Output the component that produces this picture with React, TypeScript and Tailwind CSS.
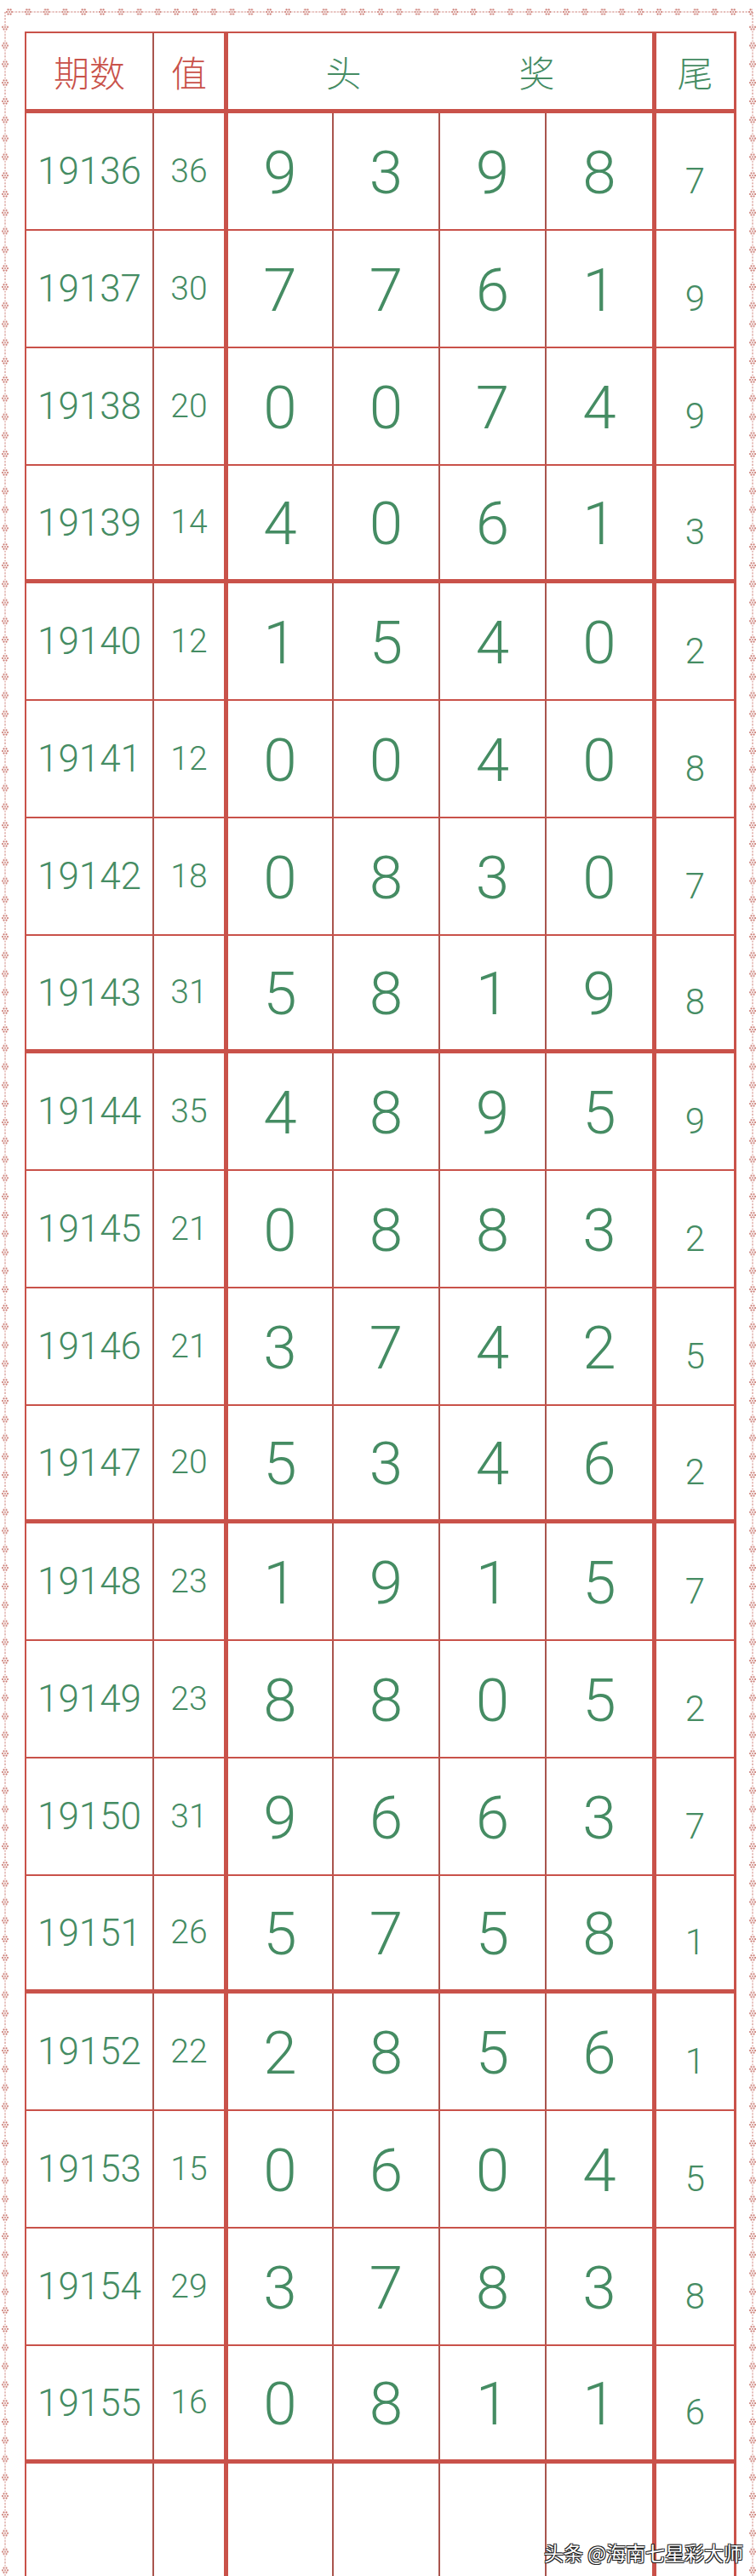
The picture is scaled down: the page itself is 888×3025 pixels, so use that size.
import React from 'react';

// ─── data ─────────────────────────────────────────────
const ROWS: [string, string, string, string][] = [
  ['19136', '36', '9398', '7'],
  ['19137', '30', '7761', '9'],
  ['19138', '20', '0074', '9'],
  ['19139', '14', '4061', '3'],
  ['19140', '12', '1540', '2'],
  ['19141', '12', '0040', '8'],
  ['19142', '18', '0830', '7'],
  ['19143', '31', '5819', '8'],
  ['19144', '35', '4895', '9'],
  ['19145', '21', '0883', '2'],
  ['19146', '21', '3742', '5'],
  ['19147', '20', '5346', '2'],
  ['19148', '23', '1915', '7'],
  ['19149', '23', '8805', '2'],
  ['19150', '31', '9663', '7'],
  ['19151', '26', '5758', '1'],
  ['19152', '22', '2856', '1'],
  ['19153', '15', '0604', '5'],
  ['19154', '29', '3783', '8'],
  ['19155', '16', '0811', '6'],
];

const FLOWER = '#c9756d';

function Flower({ cx, cy }: { cx: number; cy: number }) {
  const dots = [0, 60, 120, 180, 240, 300].map((a) => {
    const r = (a * Math.PI) / 180;
    return <circle key={a} cx={cx + Math.cos(r) * 3} cy={cy + Math.sin(r) * 3} r={1.1} fill={FLOWER} />;
  });
  return (
    <g>
      <circle cx={cx} cy={cy} r={4.6} fill="white" />
      {dots}
      <circle cx={cx} cy={cy} r={0.9} fill={FLOWER} />
    </g>
  );
}

// top strip: horizontal dotted line with flowers + corner pieces
function TopStrip() {
  return (
    <svg width={888} height={30} className="block shrink-0">
      <defs>
        <pattern id="hp" patternUnits="userSpaceOnUse" x={0} y={0} width={21.8} height={30}>
          <line x1={0} y1={14} x2={21.8} y2={14} stroke={FLOWER} strokeWidth={1} strokeDasharray="2 1.6" />
          <Flower cx={11} cy={14} />
        </pattern>
      </defs>
      <rect x={6} y={8} width={878} height={12} fill="url(#hp)" />
      <line x1={6} y1={14} x2={6} y2={30} stroke={FLOWER} strokeWidth={1} strokeDasharray="2 1.6" />
      <line x1={884} y1={14} x2={884} y2={30} stroke={FLOWER} strokeWidth={1} strokeDasharray="2 1.6" />
    </svg>
  );
}

function SideStrip({ id, x }: { id: string; x: number }) {
  return (
    <svg width={12} height={2995} className="block shrink-0">
      <defs>
        <pattern id={id} patternUnits="userSpaceOnUse" x={0} y={-8.2} width={12} height={21.8}>
          <line x1={x} y1={0} x2={x} y2={21.8} stroke={FLOWER} strokeWidth={1} strokeDasharray="2 1.6" />
          <Flower cx={x} cy={9.9} />
        </pattern>
      </defs>
      <rect x={0} y={0} width={12} height={2995} fill={`url(#${id})`} />
    </svg>
  );
}

const green = 'text-[#458c63]';
const thin = 'border-r-2 border-[#a9554e]';
const thick = 'border-r-[5px] border-[#c9524a]';
const digitFont = "font-['Roboto',_'Liberation_Sans',_sans-serif] font-light";

function DataRow({ row, groupEnd }: { row: [string, string, string, string]; groupEnd: boolean }) {
  const [no, val, digits, tail] = row;
  return (
    <div className={`flex h-[138px] ${groupEnd ? 'border-b-[5px]' : 'border-b-2'} border-[#c9524a] ${digitFont}`}>
      <div className={`w-[150px] ${thin} flex items-center justify-center text-[44px] ${green}`}>{no}</div>
      <div className={`w-[87px] ${thick} flex items-center justify-center text-[39px] ${green}`}>{val}</div>
      {digits.split('').map((d, i) => (
        <div
          key={i}
          className={`${i === 0 ? 'w-[124px]' : i === 3 ? 'w-[129px]' : 'w-[125px]'} ${i === 3 ? thick : thin} flex items-center justify-center pt-[4px] text-[71px] ${green}`}
        >
          {d}
        </div>
      ))}
      <div className={`w-[91px] flex items-center justify-center pt-[22px] text-[42px] ${green}`}>{tail}</div>
    </div>
  );
}

function EmptyRow() {
  return (
    <div className="flex h-[138px]">
      <div className={`w-[150px] ${thin}`} />
      <div className={`w-[87px] ${thick}`} />
      <div className={`w-[124px] ${thin}`} />
      <div className={`w-[125px] ${thin}`} />
      <div className={`w-[125px] ${thin}`} />
      <div className={`w-[129px] ${thick}`} />
      <div className="w-[91px]" />
    </div>
  );
}

export default function App() {
  return (
    <div
      className="relative w-[888px] h-[3025px] overflow-hidden bg-white"
      style={{ fontFamily: '"Liberation Sans", "Noto Sans CJK SC", sans-serif' }}
    >
      <TopStrip />
      <div className="flex">
        <SideStrip id="lp" x={6} />
        <div className="ml-[17px] mt-[7px] w-[836px] shrink-0 border-l-2 border-t-2 border-r-[3px] border-[#c9524a]">
          {/* header */}
          <div className="flex h-[94px] border-b-[5px] border-[#c9524a] text-[42px] font-['Noto_Sans_CJK_SC'] font-light">
            <div className={`w-[150px] ${thin} flex items-center justify-center text-[#c9524a]`}>期数</div>
            <div className={`w-[87px] ${thick} flex items-center justify-center text-[#c9524a]`}>值</div>
            <div className={`w-[503px] ${thick} flex items-center justify-center gap-[185px] ${green}`}>
              <span>头</span>
              <span>奖</span>
            </div>
            <div className={`w-[91px] flex items-center justify-center ${green}`}>尾</div>
          </div>
          {ROWS.map((r, i) => (
            <DataRow key={r[0]} row={r} groupEnd={i % 4 === 3} />
          ))}
          <EmptyRow />
        </div>
        <div className="ml-[11px]">
          <SideStrip id="rp" x={8} />
        </div>
      </div>

      {/* watermark */}
      <div
        className="absolute left-[639px] top-[2980px] text-[23px] text-white font-['Noto_Sans_CJK_SC'] whitespace-nowrap"
        style={{ textShadow: '1px 1px 0 #222, -1px -1px 0 #222, 1px -1px 0 #222, -1px 1px 0 #222' }}
      >
        头条 @海南七星彩大师
      </div>
    </div>
  );
}
